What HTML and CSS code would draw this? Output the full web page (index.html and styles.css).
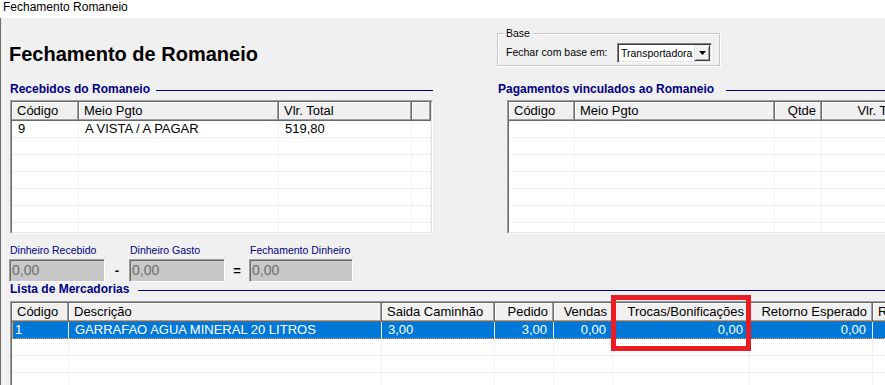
FILE: index.html
```html
<!DOCTYPE html>
<html lang="pt-BR">

<head>
    <meta charset="UTF-8">
    <title>Fechamento Romaneio</title>
    <link rel="stylesheet" href="styles.css">
</head>

<body>

    <div class="titlebar">Fechamento Romaneio</div>

    <div class="window">
        <div class="top-row">
            <!-- lado esquerdo -->
            <div class="left-col">
                <h1 class="main-title">Fechamento de Romaneio</h1>
                <div class="section-title">
                    <span>Recebidos do Romaneio</span>
                    <div class="rule"></div>
                </div>
                <div class="grid grid-recebidos">
                    <div class="grid-inner">
                        <table class="grid-table">
                            <colgroup><col><col><col><col></colgroup>
                            <tr><th>Código</th><th>Meio Pgto</th><th>Vlr. Total</th><th></th></tr>
                            <tr><td>9</td><td>A VISTA / A PAGAR</td><td>519,80</td><td></td></tr>
                            <tr><td></td><td></td><td></td><td></td></tr>
                            <tr><td></td><td></td><td></td><td></td></tr>
                            <tr><td></td><td></td><td></td><td></td></tr>
                            <tr><td></td><td></td><td></td><td></td></tr>
                            <tr><td></td><td></td><td></td><td></td></tr>
                            <tr><td></td><td></td><td></td><td></td></tr>
                        </table>
                    </div>
                </div>
            </div>

            <!-- lado direito -->
            <div class="right-col">
                <fieldset class="base-box">
                    <legend>Base</legend>
                    <div class="base-row">
                        <span class="base-label">Fechar com base em:</span>
                        <div class="combo">
                            <span class="combo-text">Transportadora</span>
                            <span class="combo-btn">
                                <svg width="7" height="4" viewBox="0 0 7 4"><path d="M0 0h7L3.5 4z" fill="#000"/></svg>
                            </span>
                        </div>
                    </div>
                </fieldset>
                <div class="section-title section-pagamentos">
                    <span>Pagamentos vinculados ao Romaneio</span>
                    <div class="rule"></div>
                </div>
                <div class="grid grid-pagamentos">
                    <div class="grid-inner">
                        <table class="grid-table">
                            <colgroup><col><col><col><col></colgroup>
                            <tr><th>Código</th><th>Meio Pgto</th><th class="num">Qtde</th><th class="num">Vlr. Total</th></tr>
                            <tr><td></td><td></td><td></td><td></td></tr>
                            <tr><td></td><td></td><td></td><td></td></tr>
                            <tr><td></td><td></td><td></td><td></td></tr>
                            <tr><td></td><td></td><td></td><td></td></tr>
                            <tr><td></td><td></td><td></td><td></td></tr>
                            <tr><td></td><td></td><td></td><td></td></tr>
                            <tr><td></td><td></td><td></td><td></td></tr>
                        </table>
                    </div>
                </div>
            </div>
        </div>

        <div class="money-row">
            <div class="money-field">
                <span class="money-label">Dinheiro Recebido</span>
                <div class="money-box">0,00</div>
            </div>
            <div class="money-op">-</div>
            <div class="money-field">
                <span class="money-label">Dinheiro Gasto</span>
                <div class="money-box">0,00</div>
            </div>
            <div class="money-op">=</div>
            <div class="money-field">
                <span class="money-label">Fechamento Dinheiro</span>
                <div class="money-box money-box-wide">0,00</div>
            </div>
        </div>

        <div class="section-title section-lista">
            <span>Lista de Mercadorias</span>
            <div class="rule"></div>
        </div>
        <div class="grid grid-mercadorias">
            <div class="grid-inner">
                <table class="grid-table">
                    <colgroup><col><col><col><col><col><col><col><col></colgroup>
                    <tr>
                        <th>Código</th><th>Descrição</th><th>Saida Caminhão</th><th class="num">Pedido</th>
                        <th class="num">Vendas</th><th class="num">Trocas/Bonificações</th><th class="num">Retorno Esperado</th><th>Retorno Real</th>
                    </tr>
                    <tr class="selected">
                        <td class="first">1</td><td>GARRAFAO AGUA MINERAL 20 LITROS</td><td>3,00</td><td class="num">3,00</td>
                        <td class="num">0,00</td><td class="num">0,00</td><td class="num">0,00</td><td></td>
                    </tr>
                    <tr><td></td><td></td><td></td><td></td><td></td><td></td><td></td><td></td></tr>
                    <tr><td></td><td></td><td></td><td></td><td></td><td></td><td></td><td></td></tr>
                    <tr><td></td><td></td><td></td><td></td><td></td><td></td><td></td><td></td></tr>
                </table>
            </div>
        </div>
    </div>

    <!-- marcação vermelha por cima da coluna -->
    <div class="highlight"></div>

</body>

</html>
```

FILE: styles.css
```css
* {
    margin: 0;
    padding: 0;
    box-sizing: border-box;
}

body {
    width: 885px;
    height: 385px;
    overflow: hidden;
    position: relative;
    background: #f0f0f0;
    font-family: "Liberation Sans", Arial, sans-serif;
    color: #000;
}

.titlebar {
    height: 18px;
    background: #fff;
    font-size: 12px;
    line-height: 15px;
    padding-left: 3px;
}

.window {
    height: 367px;
    border-left: 1px solid #6d6d6d;
    padding-left: 8px;
}

.top-row {
    display: flex;
}

.left-col {
    width: 424px;
    flex-shrink: 0;
}

.right-col {
    width: 500px;
    flex-shrink: 0;
    margin-left: 64px;
}

.main-title {
    margin-top: 25px;
    font-size: 20px;
    line-height: 23px;
    font-weight: bold;
}

/* titulos azuis com a linha */
.section-title {
    display: flex;
    align-items: center;
    margin-top: 16px;
    margin-left: 1px;
    font-size: 12px;
    line-height: 14px;
    font-weight: bold;
    color: #000080;
    white-space: nowrap;
}

.section-title .rule {
    flex: 1;
    height: 1px;
    margin: 3px 0 0 6px;
    background: #000080;
}

.section-pagamentos .rule {
    margin-left: 12px;
}

.section-lista {
    margin-top: 0;
}

.section-lista .rule {
    margin-left: 9px;
}

/* grid */
.grid {
    margin-top: 4px;
    margin-left: 1px;
    overflow: hidden;
    border: 1px solid;
    border-color: #a0a0a0 #fff #fff #a0a0a0;
    background: #fff;
}

.grid-inner {
    height: 100%;
    overflow: hidden;
    border: 1px solid;
    border-color: #696969 #e3e3e3 #e3e3e3 #696969;
}

.grid-recebidos {
    width: 423px;
    height: 134px;
}

.grid-pagamentos {
    width: 450px;
    height: 134px;
    margin-left: 10px;
}

.grid-mercadorias {
    width: 960px;
    height: 100px;
    margin-top: 5px;
}

.grid-table {
    table-layout: fixed;
    border-collapse: separate;
    border-spacing: 0;
    font-size: 13px;
}

.grid-table th {
    padding: 0 5px;
    line-height: 18px;
    font-weight: normal;
    text-align: left;
    white-space: nowrap;
    overflow: hidden;
    background: #f0f0f0;
    border-right: 1px solid #696969;
    border-bottom: 1px solid #696969;
    box-shadow: inset -1px -1px 0 #a0a0a0, inset 1px 1px 0 #fff;
}

.grid-table td {
    padding: 0 6px;
    line-height: 16px;
    white-space: nowrap;
    overflow: hidden;
    background: #fff;
    border-right: 1px solid #f0f0f0;
    border-bottom: 1px solid #f0f0f0;
}

.grid-table td:empty::after {
    content: "\00a0";
}

.grid-table .num {
    text-align: right;
}

.grid-table th.num {
    padding-right: 5px;
}

.grid-table tr.selected td {
    background: #0078d7;
    color: #fff;
    border-bottom: 1px dotted #f0a050;
}

.grid-table tr.selected td.first {
    padding-left: 3px;
    box-shadow: inset 1px 0 0 #f0a050;
}

.grid-recebidos .grid-table {
    width: 419px;
}

.grid-recebidos col:nth-child(1) { width: 67px; }
.grid-recebidos col:nth-child(2) { width: 200px; }
.grid-recebidos col:nth-child(3) { width: 133px; }
.grid-recebidos col:nth-child(4) { width: 19px; }

.grid-pagamentos .grid-table {
    width: 404px;
}

.grid-pagamentos col:nth-child(1) { width: 66px; }
.grid-pagamentos col:nth-child(2) { width: 200px; }
.grid-pagamentos col:nth-child(3) { width: 47px; }
.grid-pagamentos col:nth-child(4) { width: 91px; }

.grid-mercadorias .grid-table {
    width: 961px;
}

.grid-mercadorias col:nth-child(1) { width: 57px; }
.grid-mercadorias col:nth-child(2) { width: 313px; }
.grid-mercadorias col:nth-child(3) { width: 113px; }
.grid-mercadorias col:nth-child(4) { width: 59px; }
.grid-mercadorias col:nth-child(5) { width: 59px; }
.grid-mercadorias col:nth-child(6) { width: 137px; }
.grid-mercadorias col:nth-child(7) { width: 123px; }
.grid-mercadorias col:nth-child(8) { width: 100px; }

/* caixa Base */
.base-box {
    width: 223px;
    margin-top: 9px;
    padding: 4px 6px 2px 6px;
    border: 1px solid #c8c8c8;
    box-shadow: inset 1px 1px 0 #fff, 1px 1px 0 #fff;
}

.base-box legend {
    padding: 0 2px;
    font-size: 10.5px;
    line-height: 12px;
}

.base-row {
    display: flex;
    align-items: center;
    padding-left: 2px;
    font-size: 10.5px;
}

.base-label {
    width: 111px;
    padding-bottom: 2px;
}

.combo {
    display: flex;
    align-items: center;
    width: 95px;
    height: 20px;
    background: #fff;
    border: 1px solid;
    border-color: #808080 #fff #fff #808080;
    box-shadow: inset 1px 1px 0 #404040, inset -1px -1px 0 #e3e3e3;
    padding: 0 1px 0 3px;
}

.combo-text {
    flex: 1;
    font-size: 10.5px;
    line-height: 16px;
}

.combo-btn {
    display: flex;
    align-items: center;
    justify-content: center;
    width: 16px;
    height: 16px;
    background: #f0f0f0;
    border: 1px solid;
    border-color: #e3e3e3 #404040 #404040 #e3e3e3;
    box-shadow: inset 1px 1px 0 #fff, inset -1px -1px 0 #a0a0a0;
}

/* dinheiro */
.money-row {
    display: flex;
    align-items: flex-end;
    margin-top: 10px;
}

.money-field {
    display: flex;
    flex-direction: column;
}

.money-label {
    margin-left: 1px;
    margin-bottom: 2px;
    font-size: 10.5px;
    line-height: 13px;
    color: #000080;
}

.money-box {
    width: 96px;
    height: 23px;
    padding-left: 2px;
    font-size: 14px;
    line-height: 21px;
    color: #6d6d6d;
    background: #c8c8c8;
    border: 1px solid;
    border-color: #a0a0a0 #fff #fff #a0a0a0;
    box-shadow: inset 1px 1px 0 #696969;
}

.money-box-wide {
    width: 104px;
}

.money-op {
    width: 24px;
    height: 23px;
    line-height: 23px;
    text-align: center;
    font-size: 13px;
    font-weight: bold;
}

.highlight {
    position: absolute;
    left: 611px;
    top: 295px;
    width: 140px;
    height: 56px;
    border: 5px solid #ec1c24;
}
```
